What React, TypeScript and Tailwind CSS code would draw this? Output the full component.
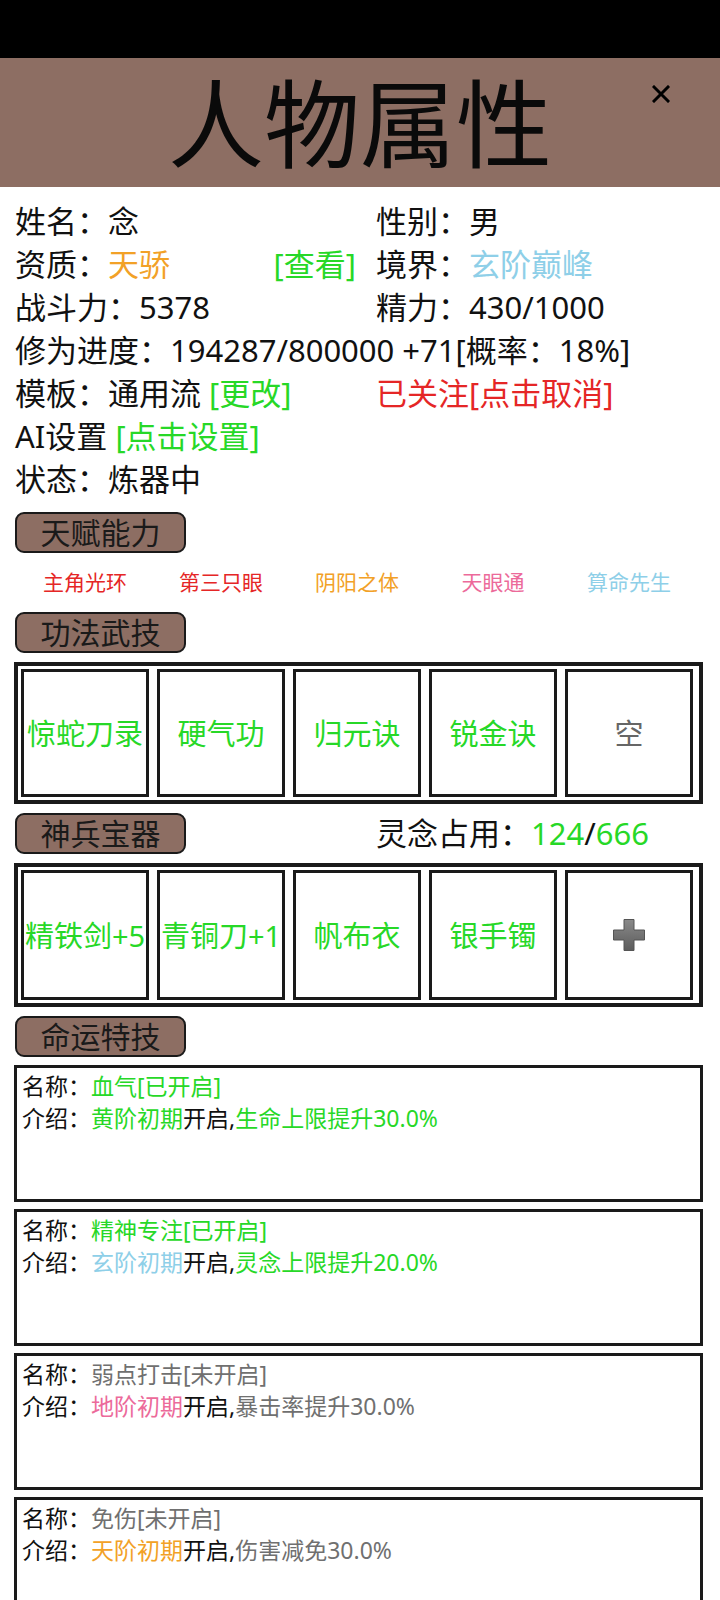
const font = { fontFamily: '"Noto Sans", "Noto Sans CJK SC", sans-serif' };

const G = "text-[#27d827]";
const GRAY = "text-[#707070]";

function Pill({ label }: { label: string }) {
  return (
    <div className="flex h-[41px] w-[171px] items-center justify-center rounded-[9px] border-2 border-[#1a1a1a] bg-[#8d6e63] text-[30px] leading-none text-[#1a1a1a]">
      {label}
    </div>
  );
}

function Cell({ children }: { children: React.ReactNode }) {
  return (
    <div className="flex w-[128px] items-center justify-center border-[3px] border-[#1a1a1a] text-[29px] leading-none whitespace-nowrap">
      {children}
    </div>
  );
}

function PlusIcon() {
  return (
    <svg width="34" height="34" viewBox="0 0 34 34">
      <defs>
        <linearGradient id="pg" x1="0" y1="0" x2="0" y2="1">
          <stop offset="0" stopColor="#8a8a8a" />
          <stop offset="1" stopColor="#5c5c5c" />
        </linearGradient>
      </defs>
      <path
        d="M12 1.5h10v10.5h10.5v10H22v10.5H12V22H1.5V12H12z"
        fill="url(#pg)"
        stroke="#555"
        strokeWidth="1"
        strokeLinejoin="round"
      />
    </svg>
  );
}

type Line = { text: string; cls?: string };

function Card({ name, intro }: { name: Line[]; intro: Line[] }) {
  return (
    <div className="h-[137px] border-[3px] border-[#1a1a1a] px-[5px] pt-[2px] text-[23px] leading-[32px] text-[#111]">
      <div>
        名称：
        {name.map((l, i) => (
          <span key={i} className={l.cls}>
            {l.text}
          </span>
        ))}
      </div>
      <div>
        介绍：
        {intro.map((l, i) => (
          <span key={i} className={l.cls}>
            {l.text}
          </span>
        ))}
      </div>
    </div>
  );
}

export default function App() {
  const skills = ["惊蛇刀录", "硬气功", "归元诀", "锐金诀"];
  const gear = ["精铁剑+5", "青铜刀+1", "帆布衣", "银手镯"];
  const talents = [
    { t: "主角光环", c: "text-[#e52626]" },
    { t: "第三只眼", c: "text-[#e52626]" },
    { t: "阴阳之体", c: "text-[#f2a127]" },
    { t: "天眼通", c: "text-[#ec6a9a]" },
    { t: "算命先生", c: "text-[#8ecfe8]" },
  ];

  return (
    <div className="min-h-[1600px] w-[720px] bg-white text-[#111]" style={font}>
      <div className="h-[58px] bg-black" />
      <div className="relative flex h-[129px] items-center justify-center bg-[#8d6e63]">
        <span className="text-[96px] leading-none text-[#0a0a0a]">人物属性</span>
        <svg
          className="absolute left-[652px] top-[27px]"
          width="18"
          height="18"
          viewBox="0 0 18 18"
        >
          <path d="M2 2L16 16M16 2L2 16" stroke="#000" strokeWidth="3" strokeLinecap="square" />
        </svg>
      </div>

      <div className="px-[15px] pt-[13px] text-[31px] leading-[43px]">
        <div className="grid grid-cols-[345px_1fr] gap-x-4">
          <div>姓名：念</div>
          <div>性别：男</div>
          <div className="flex justify-between pr-[4px]">
            <span>
              资质：<span className="text-[#f2a127]">天骄</span>
            </span>
            <span className={G}>[查看]</span>
          </div>
          <div>
            境界：<span className="text-[#8ecfe8]">玄阶巅峰</span>
          </div>
          <div>战斗力：5378</div>
          <div>精力：430/1000</div>
          <div className="col-span-2 whitespace-nowrap">修为进度：194287/800000 +71[概率：18%]</div>
          <div>
            模板：通用流 <span className={G}>[更改]</span>
          </div>
          <div className="text-[#e52626]">已关注[点击取消]</div>
          <div className="col-span-2">
            AI设置 <span className={G}>[点击设置]</span>
          </div>
          <div className="col-span-2">状态：炼器中</div>
        </div>

        <div className="mt-[11px]">
          <Pill label="天赋能力" />
        </div>
        <div className="ml-[2px] mr-[8px] grid h-[59px] grid-cols-5 items-center text-center text-[21px] leading-none">
          {talents.map((t) => (
            <span key={t.t} className={t.c}>
              {t.t}
            </span>
          ))}
        </div>

        <Pill label="功法武技" />
        <div className="mt-[9px] ml-[-1px] flex h-[142px] w-[689px] gap-[8px] border-4 border-[#1a1a1a] p-[3px]">
          {skills.map((s) => (
            <Cell key={s}>
              <span className={G}>{s}</span>
            </Cell>
          ))}
          <Cell>
            <span className="text-[#666]">空</span>
          </Cell>
        </div>

        <div className="mt-[9px] grid grid-cols-[345px_1fr] items-center gap-x-4">
          <Pill label="神兵宝器" />
          <div className="leading-none">
            灵念占用：<span className={G}>124</span>/<span className={G}>666</span>
          </div>
        </div>
        <div className="mt-[9px] ml-[-1px] flex h-[144px] w-[689px] gap-[8px] border-4 border-[#1a1a1a] p-[3px]">
          {gear.map((s) => (
            <Cell key={s}>
              <span className={G}>{s}</span>
            </Cell>
          ))}
          <Cell>
            <PlusIcon />
          </Cell>
        </div>

        <div className="mt-[9px]">
          <Pill label="命运特技" />
        </div>

        <div className="mt-[8px] ml-[-1px] flex w-[689px] flex-col gap-[7px]">
          <Card
            name={[{ text: "血气[已开启]", cls: G }]}
            intro={[
              { text: "黄阶初期", cls: G },
              { text: "开启," },
              { text: "生命上限提升30.0%", cls: G },
            ]}
          />
          <Card
            name={[{ text: "精神专注[已开启]", cls: G }]}
            intro={[
              { text: "玄阶初期", cls: "text-[#8ecfe8]" },
              { text: "开启," },
              { text: "灵念上限提升20.0%", cls: G },
            ]}
          />
          <Card
            name={[{ text: "弱点打击[未开启]", cls: GRAY }]}
            intro={[
              { text: "地阶初期", cls: "text-[#ec6a9a]" },
              { text: "开启," },
              { text: "暴击率提升30.0%", cls: GRAY },
            ]}
          />
          <Card
            name={[{ text: "免伤[未开启]", cls: GRAY }]}
            intro={[
              { text: "天阶初期", cls: "text-[#f2a127]" },
              { text: "开启," },
              { text: "伤害减免30.0%", cls: GRAY },
            ]}
          />
        </div>
      </div>
    </div>
  );
}
